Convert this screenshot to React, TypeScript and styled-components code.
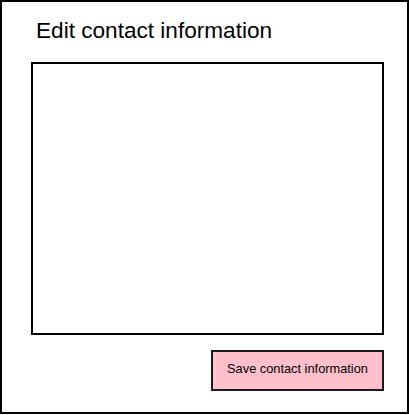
import { createGlobalStyle, styled } from 'styled-components'

const GlobalStyle = createGlobalStyle`
  body {
    margin: 0;
    font-family: "Liberation Sans", Arial, sans-serif;
    background: #fff;
  }
`

function App() {
  return (
    <>
      <GlobalStyle />
      <Panel>
        <Title>Edit contact information</Title>
        <FormArea />
        <Footer>
          <SaveButton type="button">Save contact information</SaveButton>
        </Footer>
      </Panel>
    </>
  )
}

const Panel = styled.div`
  box-sizing: border-box;
  width: 409px;
  height: 414px;
  border: 2px solid #000;
  padding: 16px 23px 0 29px;
  display: flex;
  flex-direction: column;
`

const Title = styled.h1`
  margin: 0 0 19px 5px;
  font-size: 22.6px;
  font-weight: normal;
  line-height: 25px;
  color: #000;
`

const FormArea = styled.div`
  box-sizing: border-box;
  width: 353px;
  height: 273px;
  border: 2px solid #000;
`

const Footer = styled.div`
  display: flex;
  justify-content: flex-end;
  width: 353px;
  margin-top: 15px;
`

const SaveButton = styled.button`
  box-sizing: border-box;
  width: 173px;
  height: 41px;
  background: pink;
  border: 2px solid #1a1a1a;
  font-family: "Liberation Sans", Arial, sans-serif;
  font-size: 12.8px;
  color: #000;
  padding: 0 0 5px;
  cursor: default;
`

export default App
